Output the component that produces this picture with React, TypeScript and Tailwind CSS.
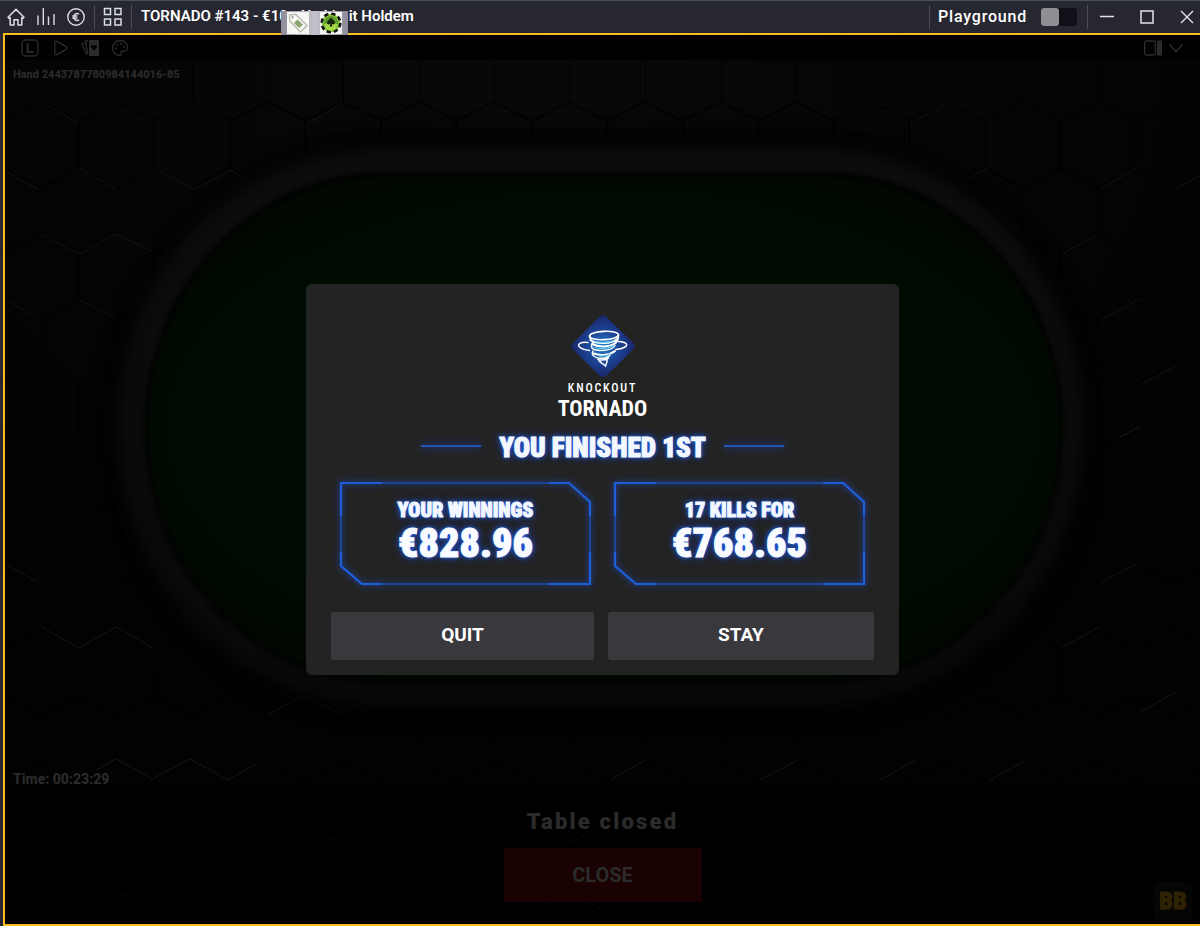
import type { ReactNode } from 'react';
import { Palette, Play } from 'lucide-react';

const GLOW = '[text-shadow:0_0_4px_#2563eb,0_0_8px_#1d4ed8,0_0_2px_#3b82f6]';

function IconButton({ label, children }: { label: string; children: ReactNode }) {
  return (
    <button type="button" aria-label={label} className="flex shrink-0 items-center justify-center">
      {children}
    </button>
  );
}

function TitleBar() {
  return (
    <header className="flex h-[33px] shrink-0 items-center border-t border-[#4a4e55] bg-[#262730] text-white">
      <div className="flex min-w-0 flex-1 items-center">
        <div className="flex items-center gap-3 pl-[7px]">
          <IconButton label="Home">
            <svg width="18" height="18" viewBox="0 0 18 18" fill="none" stroke="#dcdde2" strokeWidth="1.5" strokeLinejoin="round">
              <path d="M1 9.2 9 1.4l8 7.8-1.3 1.2-.9-.8V17H11v-5.2H7V17H3.200V9.600l-.9.800z" />
            </svg>
          </IconButton>
          <IconButton label="Statistics">
            <svg width="18" height="18" viewBox="0 0 18 18" fill="none" stroke="#dcdde2" strokeWidth="1.400">
              <path d="M1 7.500V17M6.300 0v17M11.500 8.500V17M17 6v11" />
            </svg>
          </IconButton>
          <IconButton label="Cashier">
            <svg width="18" height="18" viewBox="0 0 18 18" fill="none" stroke="#dcdde2">
              <circle cx="9" cy="9" r="8.200" strokeWidth="1.400" />
              <path d="M12 6.100A3.200 3.200 0 0 0 7 9a3.200 3.200 0 0 0 5 2.900M5.300 8.100h5M5.300 10h5" strokeWidth="1.500" />
            </svg>
          </IconButton>
        </div>
        <div className="ml-[9px] h-6 w-px shrink-0 bg-[#4b4c54]" />
        <div className="px-2">
          <IconButton label="Tile tables">
            <svg width="20" height="20" viewBox="0 0 20 20" fill="none" stroke="#dcdde2" strokeWidth="1.500">
              <path d="M1.500 1.500h6v6h-6zM12 1.500h6v6h-6zM1.500 12h6v6h-6zM12 12h6v6h-6z" />
            </svg>
          </IconButton>
        </div>
        <div className="h-6 w-px shrink-0 bg-[#4b4c54]" />
        <div className="relative ml-[9px] pb-0.5">
          <h1 className="text-[15px] leading-5 font-semibold whitespace-nowrap">TORNADO #143 - €10 - No Limit Holdem</h1>
          <div className="absolute top-[5px] left-[140px] z-10 flex h-6 w-[67px] items-center justify-around bg-linear-to-r from-[#8f8c9b] via-[#c3c1ca] to-[#8f8c9b]">
            <button type="button" aria-label="Tag" className="bg-[#f6f6f4]">
              <svg width="22" height="22" viewBox="0 0 22 22">
                <path d="m2.500 3 6-.8L20 13.500 13.500 20 2.800 9z" fill="#f8f8f5" stroke="#b7bbae" strokeWidth="1.400" strokeLinejoin="round" />
                <circle cx="5.500" cy="5.300" r="1.200" fill="#a8aaa2" />
                <path d="m10.500 7.500 5.500 5.200-4 3.300-5-5z" fill="#86a66d" />
              </svg>
            </button>
            <button type="button" aria-label="Poker chip" className="bg-[#f6f6f4]">
              <svg width="22" height="22" viewBox="0 0 22 22">
                <circle cx="11" cy="11" r="9.300" fill="#8cc63f" stroke="#111" strokeWidth="2.600" strokeDasharray="4.300 3" />
                <circle cx="11" cy="11" r="7" fill="#5c9a2c" />
                <path d="M4.500 12a6.500 6.500 0 0 0 13 0c-3-1.500-10-1.500-13 0" fill="#a6d94a" />
                <path d="M11 5.500c1.200 2 4 3.200 4 5.300 0 1.800-2.200 2.200-3.300.9l.7 2.800H9.600l.7-2.800c-1.100 1.300-3.300.9-3.300-.9 0-2.100 2.800-3.300 4-5.300" fill="#16240e" />
              </svg>
            </button>
          </div>
        </div>
      </div>
      <div className="flex shrink-0 items-center">
        <div className="h-6 w-px bg-[#4b4c54]" />
        <label htmlFor="playground" className="pl-2 text-base leading-5 font-medium tracking-wider">
          Playground
        </label>
        <input
          id="playground"
          type="checkbox"
          role="switch"
          className="ml-3.5 h-[18px] w-9 appearance-none rounded-[3px] bg-[#101118] before:block before:h-[18px] before:w-[18px] before:rounded-[3px] before:bg-[#8d8f93] checked:before:ml-[18px]"
        />
        <div className="ml-2.5 h-6 w-px bg-[#4b4c54]" />
        <div className="flex items-center gap-[26px] pr-[6px] pl-3">
          <IconButton label="Minimize">
            <svg width="14" height="14" viewBox="0 0 14 14" stroke="#e4e4e8" strokeWidth="1.500">
              <path d="M0 6.500h14" />
            </svg>
          </IconButton>
          <IconButton label="Maximize">
            <svg width="14" height="14" viewBox="0 0 14 14" fill="none" stroke="#e4e4e8" strokeWidth="1.500">
              <path d="M1 1h12v12H1z" />
            </svg>
          </IconButton>
          <IconButton label="Close window">
            <svg width="14" height="14" viewBox="0 0 14 14" stroke="#e4e4e8" strokeWidth="1.400">
              <path d="m1 1 12 12M13 1 1 13" />
            </svg>
          </IconButton>
        </div>
      </div>
    </header>
  );
}

function TableArt() {
  return (
    <svg
      aria-hidden="true"
      className="absolute inset-0 h-full w-full"
      viewBox="5 35 1195 889"
      preserveAspectRatio="xMidYMid slice"
      fill="none"
    >
      <defs>
        <pattern id="hex" width="75.500" height="132" patternUnits="userSpaceOnUse" x="41" y="102">
          <path d="M0 0l38 19 37.500-19M38 19v47L0 86v46M38 66l37.500 20" stroke="#000" strokeOpacity="0.800" strokeWidth="2" />
        </pattern>
        <radialGradient id="wall" cx="0.450" cy="0.050" r="0.750">
          <stop offset="0" stopColor="#08080a" />
          <stop offset="0.450" stopColor="#050506" />
          <stop offset="1" stopColor="#020202" />
        </radialGradient>
        <radialGradient id="felt" r="0.700">
          <stop offset="0" stopColor="#001003" />
          <stop offset="0.600" stopColor="#000b01" />
          <stop offset="1" stopColor="#000500" />
        </radialGradient>
        <linearGradient id="rail" x1="0" y1="0" x2="0" y2="1">
          <stop offset="0" stopColor="#0c0c0d" />
          <stop offset="1" stopColor="#080808" />
        </linearGradient>
        <filter id="soft" x="-10%" y="-10%" width="120%" height="120%" colorInterpolationFilters="sRGB">
          <feGaussianBlur stdDeviation="8" />
        </filter>
        <filter id="edge" x="-10%" y="-10%" width="120%" height="120%" colorInterpolationFilters="sRGB">
          <feGaussianBlur stdDeviation="2" />
        </filter>
      </defs>
      <rect x="5" y="35" width="1195" height="889" fill="url(#wall)" />
      <rect x="5" y="35" width="1195" height="889" fill="url(#hex)" />
      <g stroke="#101011" strokeWidth="1.400">
        <path d="M41 102l37 21M7 172l31 17M79 168l37 21M154 168l40 21 36-19 18 9M41 234l38 20 37-20 36 17M7 301l31 18M79 300l37 19M307 124l35-21" />
        <path d="M7 565l32 18M41 627l38 21 37-21 37 21M268 715l34-19 39 18M96 770l20-11 36 20 38-20 38 21 28-16" />
        <path d="M911 122l38-20M967 179l20-11M1101 188l38-21M1177 188l23-13M1062 254l36-20M1102 319l37-20M1140 385l37-20M1120 437l20-10" />
        <path d="M1100 583l38-20M1062 648l37-21M1138 713l38-21M990 780l36-20M880 780l36-20M610 780l36-20M760 780l38-20" />
        <path d="M306 825l33 17M498 843l35-20 37 20 35-19M649 843l35-20 36 20M116 890l37 20 37-20 38 20M535 912l34-20 38 20M1102 843l35-18" />
      </g>
      <rect x="105" y="134" width="992" height="585" rx="290" fill="#010101" filter="url(#soft)" />
      <rect x="117" y="147" width="967" height="559" rx="268" ry="272" fill="url(#rail)" filter="url(#soft)" />
      <rect x="145" y="172" width="918" height="511" rx="240" ry="252" fill="#020202" filter="url(#edge)" />
      <rect x="149" y="177" width="910" height="502" rx="236" ry="248" fill="url(#felt)" filter="url(#edge)" />
    </svg>
  );
}

function TableToolbar() {
  return (
    <nav className="relative flex h-[25px] items-center justify-between bg-black/80 px-4 text-[#2b2b2b]">
      <div className="flex items-center gap-3">
        <IconButton label="Lobby">
          <svg width="18" height="18" viewBox="0 0 18 18" fill="none" stroke="currentColor">
            <rect x="1" y="1" width="16" height="16" rx="4" strokeWidth="1.400" />
            <path d="M6.700 4.500v8.500h6" strokeWidth="2" />
          </svg>
        </IconButton>
        <IconButton label="Play">
          <Play size={18} strokeWidth={1.8} />
        </IconButton>
        <IconButton label="Cards">
          <svg width="18" height="18" viewBox="0 0 18 18" fill="none" stroke="currentColor">
            <path d="M7 1.500 4.500 2l2.300 13M3.500 4 1 5.200l4.800 10.300" strokeWidth="1.400" />
            <path
              fill="currentColor"
              stroke="none"
              fillRule="evenodd"
              d="M8 1h10v16H8zm5 10.500 3-3.600c.4-1.700-2-2.600-3-.8-1-1.800-3.400-.9-3 .8z"
            />
          </svg>
        </IconButton>
        <IconButton label="Themes">
          <Palette size={18} strokeWidth={1.8} />
        </IconButton>
      </div>
      <div className="flex items-center gap-1.5">
        <IconButton label="Side panel">
          <svg width="18" height="16" viewBox="0 0 18 16" fill="none" stroke="currentColor">
            <rect x="0.700" y="1" width="10.600" height="14" rx="1.500" strokeWidth="1.300" />
            <path d="M13 .5h5v15h-5z" fill="currentColor" stroke="none" />
          </svg>
        </IconButton>
        <IconButton label="More">
          <svg width="16" height="16" viewBox="0 0 16 16" fill="none" stroke="currentColor" strokeWidth="1.600">
            <path d="m1.500 4.500 6.500 7 6.500-7" />
          </svg>
        </IconButton>
      </div>
    </nav>
  );
}

function TornadoLogo() {
  return (
    <svg width="66" height="65" viewBox="0 0 66 65" fill="none" aria-hidden="true">
      <defs>
        <radialGradient id="diamond">
          <stop offset="0" stopColor="#2380c8" />
          <stop offset="0.500" stopColor="#1c4596" />
          <stop offset="1" stopColor="#1b256b" />
        </radialGradient>
      </defs>
      <path d="M30 2.500Q33 0 36 2.500L63.500 29.500Q66 32 63.500 35L36 62Q33 64.500 30 62L2.500 35Q0 32 2.500 29.500Z" fill="url(#diamond)" />
      <g stroke="#fff" strokeLinecap="round">
        <ellipse cx="34" cy="21.500" rx="14.500" ry="4.200" strokeWidth="1.700" transform="rotate(-3 34 21.500)" />
        <path d="M19.500 22c0 3 2 5 4 7M48.500 21.500c0 3-1 5.500-3.500 8" strokeWidth="1.500" />
        <path d="M20.500 26c6 4.500 21 4 27-1M22 30c7 3.500 18 3.500 24-1.500" strokeWidth="2" />
        <path d="M22 30c-2 4.500 2 6.500 9 6.500 6 0 12-1.500 14-5" strokeWidth="1.500" />
        <path d="M24 39.500c6 2.500 16 1.500 21-2.500" strokeWidth="2" />
        <path d="M23 37c-2 4 1 6 5 7 4 .8 10 0 12-3" strokeWidth="1.500" />
        <path d="M28 45.500c3 1 7 .5 10.500-1.500M29 46c.5 3 4 3 6.500 6 1-2 2-4 1.500-7" strokeWidth="1.600" />
        <path d="M18 28.500c-7-.8-11.500 1.500-8.500 4.500 2 2 6 3 10 3.500M48 27.500c9 .5 11 3.500 6 6-2 1-5 1.700-8 2.100" strokeWidth="1.500" />
      </g>
      <path d="M24 33.500c6 1.500 14 1.200 20-1.500M29 42c4 .5 8 0 11-2M24 27c6 1.800 14 1.500 20-.5" stroke="#5cc8f0" strokeWidth="1.200" />
    </svg>
  );
}

function PrizeBox({ label, amount }: { label: string; amount: string }) {
  return (
    <section className="relative h-[103px] flex-1 pt-[18px] text-center font-['Roboto_Condensed',Roboto,sans-serif] font-black">
      <svg
        aria-hidden="true"
        className="absolute inset-0 h-full w-full overflow-visible [filter:drop-shadow(0_0_3px_#1d4ed8)]"
        viewBox="0 0 252 103"
        preserveAspectRatio="none"
        fill="none"
      >
        <path d="M1 1h229l21 19v82H22L1 84z" stroke="#1c4fae" strokeWidth="1.600" />
        <path d="M42 1H1v33M210 1h20l21 19v14M251 70v32h-41M42 102H22L1 84V70" stroke="#1e5fd8" strokeWidth="2.200" />
      </svg>
      <p className={`relative text-xl leading-5 text-[#f3f8ff] [-webkit-text-stroke:1px_#f3f8ff] ${GLOW}`}>{label}</p>
      <p className={`relative text-[40px] leading-12 text-[#f8fbff] [-webkit-text-stroke:1px_#f8fbff] ${GLOW}`}>{amount}</p>
    </section>
  );
}

function ResultDialog() {
  return (
    <section
      role="dialog"
      aria-labelledby="result-title"
      className="w-full max-w-[593px] rounded-md bg-[#232323] px-[25px] pt-[30px] pb-[15px] text-white"
    >
      <div className="flex flex-col items-center font-['Roboto_Condensed',Roboto,sans-serif]">
        <TornadoLogo />
        <p className="text-xs leading-[18px] font-medium tracking-[0.15em]">KNOCKOUT</p>
        <p className="text-[22px] leading-6 font-bold">TORNADO</p>
      </div>
      <div className="mt-[7px] flex items-center justify-center gap-[18px]">
        <span className="mb-1 h-0.5 w-[60px] bg-[#2156b8] shadow-[0_0_8px_#1d4ed8]" />
        <h2
          id="result-title"
          className={`font-['Roboto_Condensed',Roboto,sans-serif] text-[27px] leading-10 font-black text-[#f3f8ff] [-webkit-text-stroke:1px_#f3f8ff] ${GLOW}`}
        >
          YOU FINISHED 1ST
        </h2>
        <span className="mb-1 h-0.5 w-[60px] bg-[#2156b8] shadow-[0_0_8px_#1d4ed8]" />
      </div>
      <div className="mt-3.5 flex gap-[23px] px-[9px]">
        <PrizeBox label="YOUR WINNINGS" amount="€828.96" />
        <PrizeBox label="17 KILLS FOR" amount="€768.65" />
      </div>
      <div className="mt-[27px] flex gap-3.5 text-[19px] leading-6 font-bold">
        <button type="button" className="h-12 w-[263px] rounded-[3px] bg-[#38383d] pb-0.5">
          QUIT
        </button>
        <button type="button" className="h-12 flex-1 rounded-[3px] bg-[#38383d] pb-0.5">
          STAY
        </button>
      </div>
    </section>
  );
}

export default function App() {
  return (
    <div className="flex min-h-screen flex-col bg-[#262730] font-['Roboto',sans-serif]">
      <TitleBar />
      <main className="relative ml-[3px] flex flex-1 flex-col border-y-2 border-l-2 border-[#f8bc22] bg-[#030303]">
        <TableArt />
        <TableToolbar />
        <div className="relative flex flex-1 flex-col justify-between px-2 pt-[7px] pb-[3px] font-extrabold text-[#2b2b2b]">
          <p className="text-[11px] leading-4">Hand 2443787780984144016-85</p>
          <p className="text-sm leading-4">Time: 00:23:29</p>
        </div>
        <footer className="relative flex h-[134px] items-end bg-black/60 pb-[5px] text-[#2b2b2b]">
          <div className="flex flex-1 flex-col items-center self-start pt-[18px]">
            <p className="text-[22px] leading-7 font-black tracking-widest">Table closed</p>
            <button type="button" className="mt-3 h-[54px] w-[198px] bg-[#1a0202] text-xl font-bold">
              CLOSE
            </button>
          </div>
          <button
            type="button"
            className="absolute right-2 bottom-1 h-[38px] w-[38px] rounded-sm bg-[#050506] font-['Roboto_Condensed',Roboto,sans-serif] text-2xl font-black text-[#2e2202] [-webkit-text-stroke:1px_#2e2202]"
          >
            BB
          </button>
        </footer>
        <div className="absolute inset-0 grid place-items-center">
          <ResultDialog />
        </div>
      </main>
    </div>
  );
}
